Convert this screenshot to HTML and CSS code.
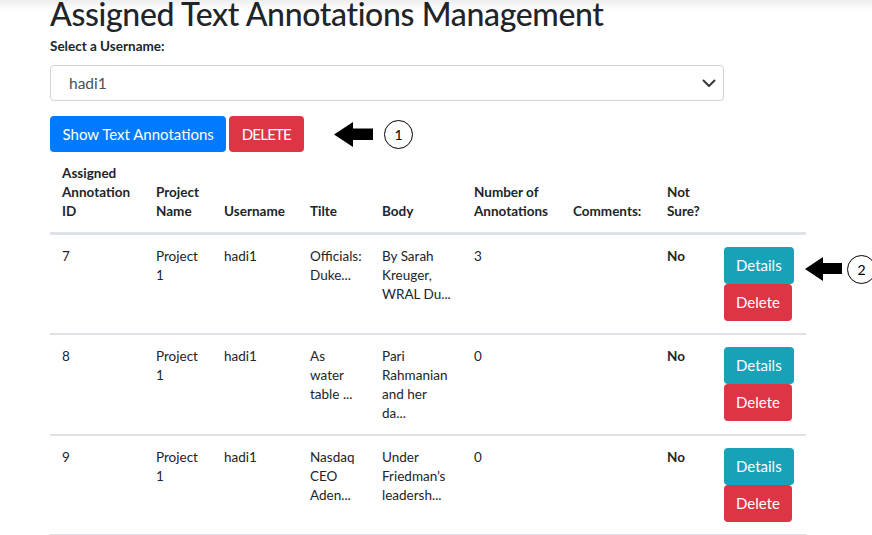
FILE: index.html
```html
<!DOCTYPE html>
<html lang="en">
<head>
<meta charset="utf-8">
<title>Assigned Text Annotations Management</title>
<link rel="stylesheet" href="styles.css">
</head>
<body>
<div class="page">
  <h1 class="title">Assigned Text Annotations Management</h1>
  <label class="field-label" for="user">Select a Username:</label>
  <div class="select">
    <span class="select-value">hadi1</span>
    <svg class="chevron" width="14" height="9" viewBox="0 0 14 9"><path d="M1.5 1.5 L7 7 L12.5 1.5" fill="none" stroke="#343a40" stroke-width="2" stroke-linecap="round" stroke-linejoin="round"/></svg>
  </div>
  <div class="actions">
    <button class="btn btn-primary">Show Text Annotations</button>
    <button class="btn btn-danger btn-upper">DELETE</button>
    <div class="callout callout-1">
      <svg class="arrow" width="40" height="26" viewBox="0 0 40 26"><path d="M0 12.5 L19 0 L19 6.5 L39 6.5 L39 18 L19 18 L19 25 Z" fill="#000"/></svg>
      <span class="badge">1</span>
    </div>
  </div>
  <div class="table-wrap">
    <table class="table">
      <colgroup>
        <col style="width:94px"><col style="width:68px"><col style="width:86px"><col style="width:72px"><col style="width:92px"><col style="width:99px"><col style="width:94px"><col style="width:57px"><col style="width:94px">
      </colgroup>
      <thead>
        <tr>
          <th>Assigned<br>Annotation<br>ID</th>
          <th>Project<br>Name</th>
          <th>Username</th>
          <th>Tilte</th>
          <th>Body</th>
          <th>Number of<br>Annotations</th>
          <th>Comments:</th>
          <th>Not<br>Sure?</th>
          <th></th>
        </tr>
      </thead>
      <tbody>
        <tr>
          <td>7</td>
          <td>Project<br>1</td>
          <td>hadi1</td>
          <td>Officials:<br>Duke...</td>
          <td>By Sarah<br>Kreuger,<br>WRAL Du...</td>
          <td>3</td>
          <td></td>
          <td class="strong">No</td>
          <td class="btn-cell"><button class="btn btn-info">Details</button><button class="btn btn-danger">Delete</button></td>
        </tr>
        <tr>
          <td>8</td>
          <td>Project<br>1</td>
          <td>hadi1</td>
          <td>As<br>water<br>table ...</td>
          <td>Pari<br>Rahmanian<br>and her<br>da...</td>
          <td>0</td>
          <td></td>
          <td class="strong">No</td>
          <td class="btn-cell"><button class="btn btn-info">Details</button><button class="btn btn-danger">Delete</button></td>
        </tr>
        <tr>
          <td>9</td>
          <td>Project<br>1</td>
          <td>hadi1</td>
          <td>Nasdaq<br>CEO<br>Aden...</td>
          <td>Under<br>Friedman’s<br>leadersh...</td>
          <td>0</td>
          <td></td>
          <td class="strong">No</td>
          <td class="btn-cell"><button class="btn btn-info">Details</button><button class="btn btn-danger">Delete</button></td>
        </tr>
      </tbody>
    </table>
    <div class="callout callout-2">
      <svg class="arrow" width="38" height="24" viewBox="0 0 38 24"><path d="M0 12 L18 0 L18 6 L37 6 L37 17 L18 17 L18 24 Z" fill="#000"/></svg>
      <span class="badge">2</span>
    </div>
  </div>
</div>
</body>
</html>
```

FILE: styles.css
```css
* { box-sizing: border-box; }
html, body { margin: 0; padding: 0; background: #fff; }
body {
  font-family: Lato, "Open Sans", "Liberation Sans", sans-serif;
  color: #212529;
  position: relative;
  overflow: hidden;
  height: 535px;
}
body::before {
  content: "";
  position: absolute;
  left: 0; right: 0; top: 0;
  height: 10px;
  background: linear-gradient(rgba(0,0,0,0.07), rgba(0,0,0,0));
  pointer-events: none;
}
.page {
  padding-left: 50px;
  width: 806px;
  display: flex;
  flex-direction: column;
}
.title {
  margin: 0 0 8px 0;
  font-size: 32px;
  line-height: 28px;
  letter-spacing: -0.35px;
  font-weight: 500;
  color: #212529;
}
.field-label {
  font-size: 13.5px;
  font-weight: 700;
  line-height: 20px;
  color: #212529;
}
.select {
  margin-top: 9px;
  width: 674px;
  height: 36px;
  border: 1px solid #ced4da;
  border-radius: 4px;
  display: flex;
  align-items: center;
  justify-content: space-between;
  padding: 0 7px 0 18px;
}
.select-value {
  font-size: 15.5px;
  color: #495057;
}
.actions {
  margin-top: 15px;
  display: flex;
  align-items: center;
  gap: 3px;
  position: relative;
}
.btn {
  font-family: inherit;
  border: 0;
  border-radius: 4px;
  color: #fff;
  font-size: 15px;
  height: 36px;
  padding: 0 12.5px;
  line-height: 36px;
  cursor: pointer;
}
.btn-upper { letter-spacing: -0.8px; padding: 0 13px 0 12.5px; }
.btn-primary { background: #007bff; }
.btn-danger { background: #dc3545; }
.btn-info { background: #17a2b8; }
.callout {
  position: absolute;
  display: flex;
  align-items: center;
}
.callout-1 { left: 284px; top: 4px; }
.callout-1 .arrow { margin-right: 10px; }
.badge {
  width: 29px;
  height: 29px;
  border: 1.6px solid #000;
  border-radius: 50%;
  display: flex;
  align-items: center;
  justify-content: center;
  font-size: 14px;
  color: #000;
  background: #fff;
}
.table-wrap { position: relative; }
.table {
  width: 756px;
  table-layout: fixed;
  border-collapse: collapse;
  font-size: 13.5px;
  line-height: 18.75px;
}
.table th,
.table td { white-space: nowrap; }
.table th {
  text-align: left;
  vertical-align: bottom;
  font-weight: 700;
  padding: 12px;
  border-bottom: 3px solid #dee2e6;
}
.table td {
  vertical-align: top;
  padding: 12px;
  border-bottom: 2px solid #dee2e6;
}
.table td.strong { font-weight: 700; }
.btn-cell .btn {
  display: block;
  height: 37px;
  line-height: 37px;
  padding: 0 12px;
}
.callout-2 { left: 755px; top: 102.5px; }
.callout-2 .arrow { margin-right: 4px; }
```
